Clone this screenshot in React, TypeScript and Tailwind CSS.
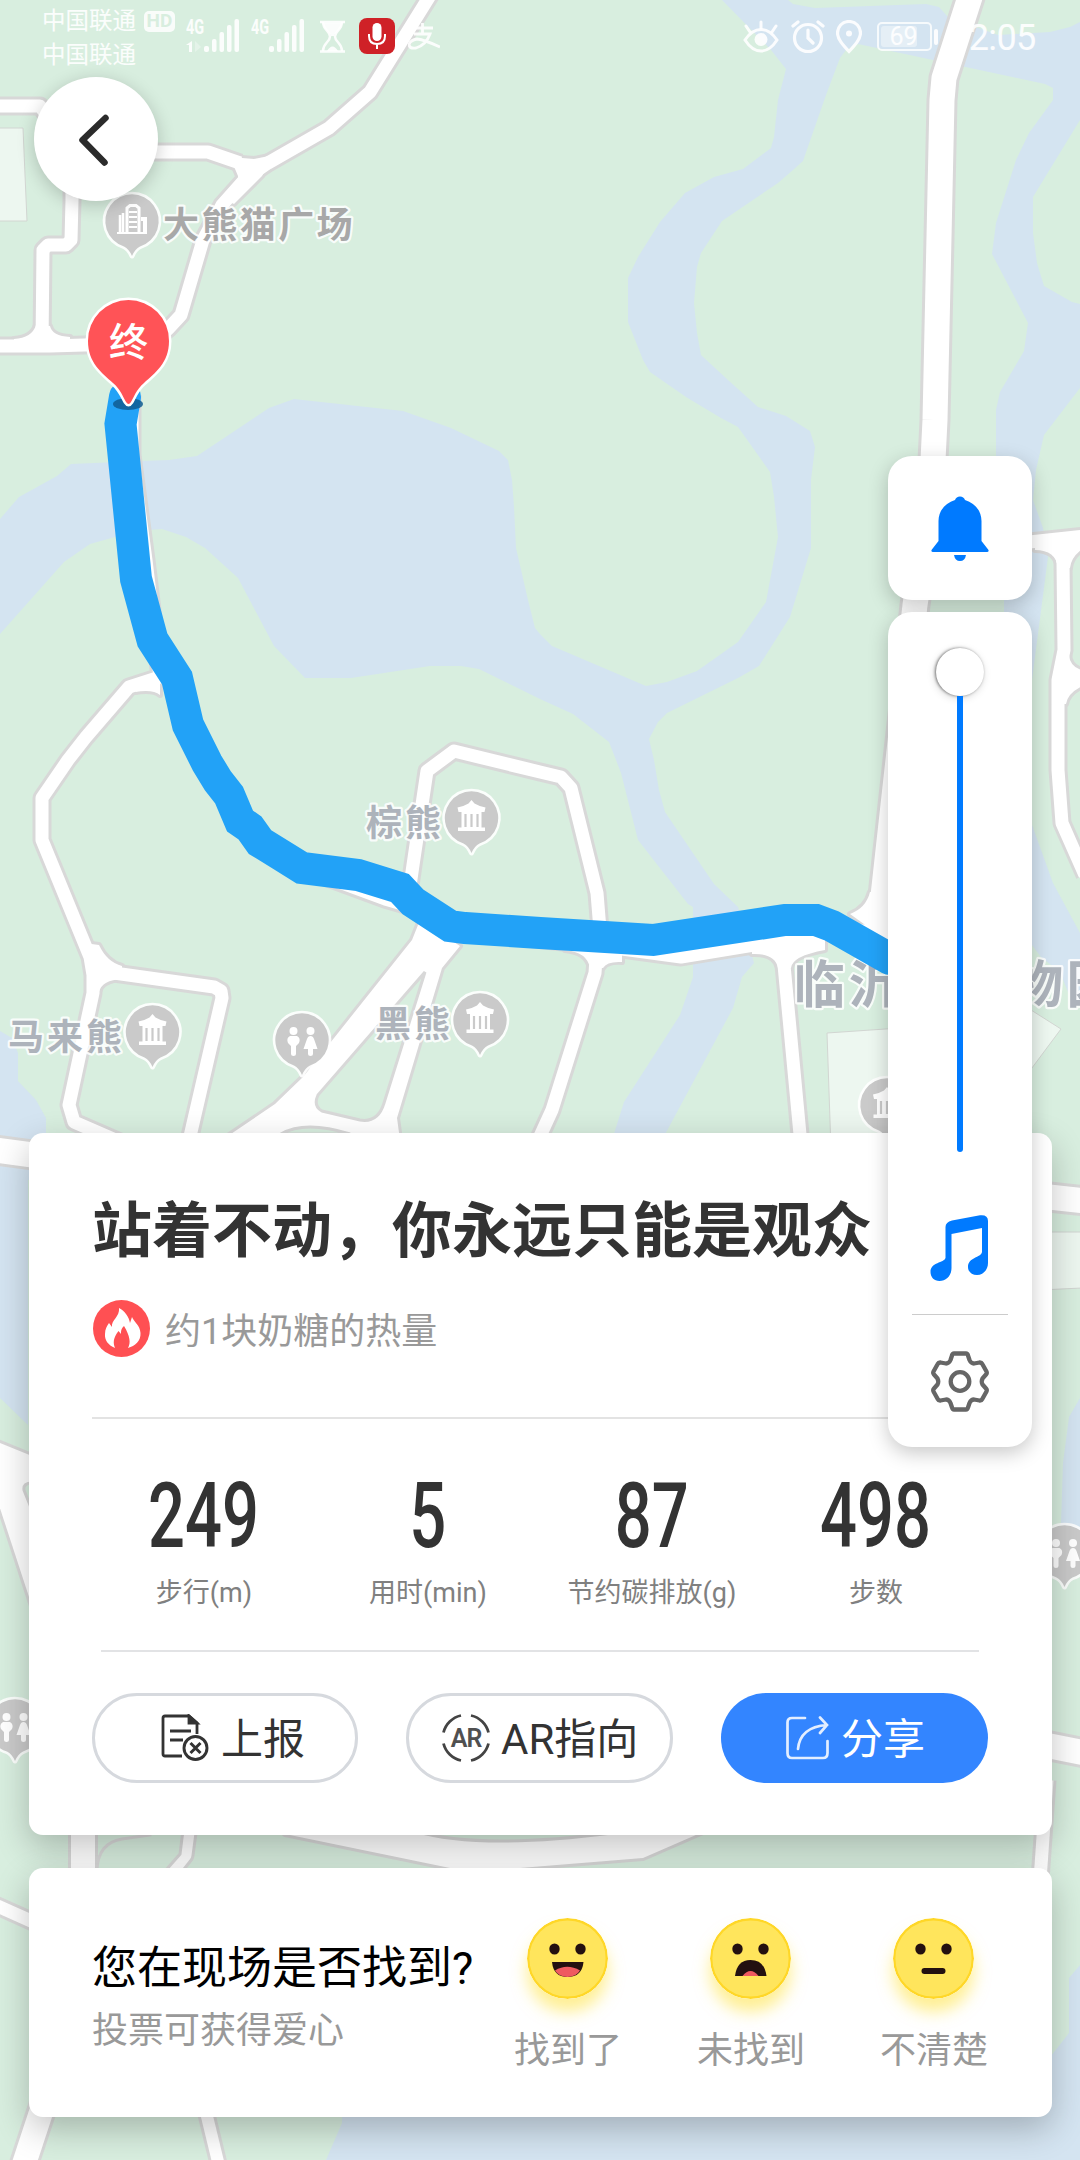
import React from "react";

const fontMain = "font-[Roboto,'Noto_Sans_CJK_SC',sans-serif]";

const GREEN = "#d8eedf";
const WATER = "#d4e4f1";

const waterShapes: string[] = [
  "M722 0L771 50L786 69L778 100L774 137L771 148L743 169L714 177L685 193L660 222L638 257L628 278L628 322L643 360L650 372L686 397L721 418L738 427L770 472L774 497L778 537L766 602L738 642L697 671L667 682L646 686L552 646L540 634L535 628L528 600L516 548L514 507L512 480L508 460L499 451L451 428L403 411L294 399L269 408L197 456L169 460L141 461L71 464L57 476L19 497L0 519V634L64 562L90 544L115 537L148 530L162 529L186 537L205 548L238 578L274 646L305 678H351L430 666H461L479 669L540 699L573 714L609 742L616 760L621 773L638 840L688 904L693 907V977L680 1015L624 1102L612 1140H662L733 1008L742 977L754 963L752 955L738 907L714 884L665 812L659 790L654 760L649 739L658 722L667 713L738 678L759 666L790 617L811 548V480L815 447L810 431L786 416L758 407L728 380L701 355L697 333L694 303L697 267L701 253L722 221L778 183L793 170L803 161L826 95L840 58L846 50L858 44L933 60L1045 84L1053 88V100L1029 133L1016 160L996 223L992 254L1028 323L1024 351L1000 392L996 410V560L1004 600V680H1032L1048 557L1043 528L1033 500L1036 470L1044 435L1080 388V304L1072 302L1044 286L1037 263L1033 233V197L1080 120V22L1070 27L1050 32L998 35L948 17L939 7L926 4L815 8L793 4L788 0Z",
  "M1032 825L1053 883L1080 933V1002L1068 992L1060 972L1041 957L1032 945Z",
  "M0 1031L12 1038L18 1053V1081L36 1100L46 1118V1180L28 1180V1425L0 1398Z",
  "M1080 1398L1069 1417L1063 1463L1061 1523V1555H1080Z",
  "M1080 1965L1069 1978V2033L1040 2070V2100H342V2123L326 2160H1080Z",
];

const buildings: string[] = [
  "M-2 128H23L27 221H-2Z",
  "M827 1033L900 1028V1150H831Z",
  "M1020 1003L1061 1029L1020 1084Z",
  "M1040 1232H1082V1288L1040 1290Z",
];

const roads: { d: string; w: number }[] = [
  { d: "M431 -6L370 92L329 128L268 163L246 178L222 205L203 240L181 315L168 329L150 343L84 345L50 346H-5", w: 13 },
  { d: "M-5 106H40L72 150V200L71 240L66 245H48L43 250L42 345", w: 13 },
  { d: "M72 150L157 152H208L240 163", w: 13 },
  { d: "M132 395V455L146 560L160 677L129 687L86 737L68 760L42 798V840L90 957L93 975V993L69 1105L74 1122L120 1142", w: 13 },
  { d: "M90 966L114 973L214 987L221 991L222 998L188 1145", w: 13 },
  { d: "M971 -6L944 78L942 100L935 420L931 500L915 605L898 760L882 905L895 940", w: 25 },
  { d: "M1020 543L1085 536", w: 13 },
  { d: "M1059 540L1063 563L1064 650L1058 680V770L1062 823L1085 875", w: 13 },
  { d: "M1058 690L1085 675", w: 13 },
  { d: "M301 868L385 899L430 912L461 930L545 940L600 946L681 957L760 944L800 934L885 930", w: 13 },
  { d: "M408 900L413 865L427 771L454 751L540 772L561 777L571 788L597 893L600 930", w: 13 },
  { d: "M597 945L595 973L552 1110L536 1145", w: 13 },
  { d: "M783 945L784 965L801 1145", w: 13 },
  { d: "M-5 1150L40 1156", w: 25 },
  { d: "M1040 1196L1085 1201", w: 25 },
  { d: "M1040 1744L1085 1753", w: 25 },
  { d: "M1047 1780L1040 1880", w: 13 },
  { d: "M-5 1905L40 1925", w: 13 },
  { d: "M83 1820V1880", w: 24 },
  { d: "M189 1825L185 1855L170 1874", w: 13 },
  { d: "M50 2085L22 2170", w: 24 },
  { d: "M203 2100L220 2170", w: 12 },
];

const junctions: string[] = [
  "M230 157L254 159L274 155L262 176L234 204L226 200L238 182L238 176Z",
  "M36 325Q32 338 14 339V351H70V337Q52 336 50 326Z",
  "M148 680Q158 676 160 665V695Q153 689 135 692Z",
  "M420 920L412 940L303 1077L275 1104L222 1140H400L397 1118L442 968L460 946Z",
  "M84 943L99 945Q107 962 122 966V979Q102 980 99 992H87L88 975Z",
  "M565 950Q587 952 590 968H603Q607 961 622 962V940H565Z",
  "M752 954Q775 953 778 968H791Q792 956 825 950V930H752Z",
  "M850 914Q866 908 870 892H900V950Z",
  "M1035 550Q1056 550 1058 568H1070Q1071 556 1085 547V536H1035Z",
  "M1069 655Q1070 668 1085 671V685Q1068 692 1066 704H1054V680Z",
  "M-5 1441L32 1456V1606L-5 1493Z",
  "M285 1834L450 1868H520L643 1858L712 1828H285Z",
];

const greenIslands: string[] = [
  "M425 972L318 1095Q313 1106 322 1111L360 1120Q378 1123 384 1103Z",
  "M281 1134Q305 1120 350 1134Z",
  "M415 1831Q478 1850 612 1833V1825H415Z",
  "M97 1870Q98 1843 122 1839L150 1835V1830H183L180 1854L166 1870Z",
  "M40 1530L24 1490Q23 1483 32 1483Z",
];

function PavilionGlyph() {
  return (
    <g fill="#fff">
      <path d="M0 -18L3 -14.500Q7 -12 14 -10.500L13 -6H10V9.500H13.500V13H-13.500V9.500H-10V-6H-13L-14 -10.500Q-7 -12 -3 -14.500Z" />
      <path d="M-6 -4V9M0 -4V9M6 -4V9" stroke="#cacaca" strokeWidth="2.200" />
    </g>
  );
}

function ToiletGlyph() {
  return (
    <g fill="#fff">
      <circle cx="-8.500" cy="-9" r="4" />
      <circle cx="8.500" cy="-9" r="4" />
      <path d="M-12 -4H-5Q-1 -2 -3 3L-6 6V14Q-6 16 -8.500 16Q-11 16 -11 14V6L-14 3Q-16 -2 -12 -4Z" />
      <path d="M8.500 -4Q11 -4 12 -1L15.500 9H11V14Q11 16 8.500 16Q6 16 6 14V9H1.500L5 -1Q6 -4 8.500 -4Z" />
    </g>
  );
}

function BuildingGlyph() {
  return (
    <g fill="none" stroke="#fff">
      <path d="M-5 11V-13L-2 -15.500H4L7 -13V11" strokeWidth="3" />
      <path d="M-3 -9H5M-3 -4H5M-3 1H5M-3 6H5" strokeWidth="1.800" />
      <path d="M-12 -6V11M-9 -8V11" strokeWidth="2.500" />
      <path d="M9 -2H13V11" strokeWidth="4" />
      <path d="M-15 12H15" strokeWidth="2" />
    </g>
  );
}

function Poi({ x, y, kind }: { x: number; y: number; kind: "pavilion" | "toilet" | "building" }) {
  return (
    <g transform={`translate(${x} ${y})`}>
      <path
        d="M-8 25.500A26.700 26.700 0 1 1 8 25.500Q3 28 0 35Q-3 28 -8 25.500Z"
        fill="#cacaca"
        stroke="#fff"
        strokeOpacity="0.900"
        strokeWidth="5"
        paintOrder="stroke"
        strokeLinejoin="round"
      />
      {kind === "pavilion" ? <PavilionGlyph /> : kind === "toilet" ? <ToiletGlyph /> : <BuildingGlyph />}
    </g>
  );
}

function MapLabel({ x, y, size, gap, fill, children }: { x: number; y: number; size: number; gap: number; fill: string; children: string }) {
  return (
    <text x={x} y={y} fontSize={size} letterSpacing={gap} fontWeight="600" fill={fill} stroke="#fff" strokeOpacity="0.850" strokeWidth="4.500" strokeLinejoin="round" paintOrder="stroke">
      {children}
    </text>
  );
}

function MapCanvas() {
  return (
    <svg className={`absolute inset-0 ${fontMain}`} width="1080" height="2160" viewBox="0 0 1080 2160">
      <rect width="1080" height="2160" fill={GREEN} />
      {waterShapes.map((d) => (
        <path key={d} d={d} fill={WATER} />
      ))}
      {buildings.map((d) => (
        <path key={d} d={d} fill="#edf7f0" stroke="#d2d6d2" strokeWidth="1" />
      ))}
      <g fill="none" stroke="#d8d8d8" strokeLinejoin="round">
        {roads.map((r) => (
          <path key={r.d} d={r.d} strokeWidth={r.w + 6} />
        ))}
        {junctions.map((d) => (
          <path key={d} d={d} strokeWidth="6" />
        ))}
      </g>
      <g fill="none" stroke="#fff" strokeLinejoin="round">
        {roads.map((r) => (
          <path key={r.d} d={r.d} strokeWidth={r.w} />
        ))}
        {junctions.map((d) => (
          <path key={d} d={d} fill="#fff" stroke="none" />
        ))}
      </g>
      {greenIslands.map((d) => (
        <path key={d} d={d} fill={GREEN} stroke="#d8d8d8" strokeWidth="3" />
      ))}

      <Poi x={132} y={221} kind="building" />
      <Poi x={471.500} y={818} kind="pavilion" />
      <Poi x={152.500} y={1032} kind="pavilion" />
      <Poi x={480} y={1020} kind="pavilion" />
      <Poi x={302} y={1040} kind="toilet" />
      <Poi x={887} y={1105} kind="pavilion" />
      <Poi x={15} y={1726} kind="toilet" />
      <Poi x={1064.500} y={1552} kind="toilet" />

      <MapLabel x={163} y={238} size={36} gap={2.4} fill="#a8a8a8">大熊猫广场</MapLabel>
      <MapLabel x={366} y={836} size={36} gap={3} fill="#adb3bb">棕熊</MapLabel>
      <MapLabel x={8} y={1049.5} size={36} gap={3} fill="#adb3bb">马来熊</MapLabel>
      <MapLabel x={375} y={1037} size={36} gap={3} fill="#adb3bb">黑熊</MapLabel>
      <MapLabel x={794} y={1003} size={51} gap={3.5} fill="#adb3bb">临沂动植物园</MapLabel>

      <path
        d="M125 397L120.500 424L136 579L152.500 640L177 678L188 725L207 763L218 781L229 795L240 821L250 828L260 842L281 855L302 868L358 875L400 888L413 902L450 926L465 928L540 933L653 940L785 920H816L832 926L890 959"
        fill="none"
        stroke="#22a2f7"
        strokeWidth="32"
        strokeLinecap="round"
        strokeLinejoin="miter"
      />

      <ellipse cx="128" cy="404" rx="15" ry="6" fill="#0f5c92" fillOpacity="0.850" />
      <path
        d="M128.500 300A40.500 40.500 0 0 1 169 341C169 363 155 373 144 383C136 390 134 397 131 402Q128.500 406 126 402C123 397 121 390 113 383C102 373 88 363 88 341A40.500 40.500 0 0 1 128.500 300Z"
        fill="#ff5357"
        stroke="#fff"
        strokeWidth="5"
        paintOrder="stroke"
      />
      <text x="128.500" y="356" fontSize="39" fontWeight="500" fill="#fff" textAnchor="middle">终</text>
    </svg>
  );
}

function Signal() {
  return (
    <svg className="h-[33px] w-[35px]" viewBox="0 0 35 33" fill="currentColor">
      <rect x="0" y="27" width="5" height="6" rx="2" />
      <rect x="8" y="20" width="4.500" height="13" rx="2" />
      <rect x="15.500" y="13" width="4.500" height="20" rx="2" />
      <rect x="23" y="6" width="4.500" height="27" rx="2" />
      <rect x="30.500" y="0" width="4.500" height="33" rx="2" />
    </svg>
  );
}

function Network({ second }: { second?: boolean }) {
  return (
    <div className="flex">
      <div className="flex w-[18px] flex-col items-start">
        <span className="origin-left scale-x-[0.72] text-[20px] leading-[16px] font-bold">4G</span>
        {!second && (
          <svg className="mt-[6px] h-[11px] w-[17px]" viewBox="0 0 17 11" fill="currentColor">
            <path d="M6 0V11H3V4H0Z" />
            <path d="M9 0V11L15 6Z" opacity="0.350" />
          </svg>
        )}
      </div>
      <Signal />
    </div>
  );
}

function StatusBar() {
  return (
    <div className="flex h-[72px] items-start pl-[42px] text-white/90">
      <div className="flex flex-col pt-[4px] text-[23.500px] leading-[34px]">
        <div className="flex items-center gap-[8px]">
          <span>中国联通</span>
          <span className="flex h-[21px] w-[31px] items-center justify-center rounded-[5px] bg-white/85 text-[19px] font-bold text-[#d8eedf]">HD</span>
        </div>
        <span>中国联通</span>
      </div>
      <div className="mt-[19px] ml-[11px] flex gap-[12px]">
        <Network />
        <Network second />
      </div>
      <svg className="mt-[20px] ml-[16px] h-[33px] w-[25px]" viewBox="0 0 25 33" fill="none" stroke="currentColor" strokeWidth="2.500">
        <path d="M0 2H25M0 31.500H25" />
        <path d="M3 2C3 10 10 11 10 16.500C10 22 3 23 3 31M22 2C22 10 15 11 15 16.500C15 22 22 23 22 31" />
        <path d="M3 3H22C22 9 15 12 14 16H11C10 12 3 9 3 3ZM7 31Q12.500 22 18 31Z" fill="currentColor" stroke="none" />
      </svg>
      <div className="mt-[18px] ml-[14px] flex h-[36px] w-[36px] items-center justify-center rounded-[8px] bg-[#cf2127] text-white">
        <svg width="18" height="26" viewBox="0 0 18 26" fill="none" stroke="currentColor" strokeWidth="2">
          <rect x="4.500" y="0" width="9" height="18" rx="4.500" fill="currentColor" stroke="none" />
          <path d="M1 11V13Q1 21 9 21Q17 21 17 13V11M9 21V26" />
        </svg>
      </div>
      <svg className="mt-[23px] ml-[13px] h-[28px] w-[32px]" viewBox="0 0 32 28" fill="none" stroke="currentColor" strokeWidth="2.800">
        <path d="M4 5H25M14.500 0V10M6 11H22Q18 22 8 25Q2 26 1 22Q2 17 9 16Q17 17 32 24" />
      </svg>

      <svg className="mt-[20px] ml-[303px] h-[33px] w-[36px]" viewBox="0 0 36 33" fill="none" stroke="currentColor" strokeWidth="3">
        <path d="M2 20Q9 9.500 18 9.500Q27 9.500 34 20Q27 31 18 31Q9 31 2 20Z" />
        <circle cx="18" cy="19.500" r="6.500" fill="currentColor" stroke="none" />
        <path d="M18 8V2M7 12L3 6M29 12L33 6" strokeLinecap="round" />
      </svg>
      <svg className="mt-[19px] ml-[12px] h-[35px] w-[34px]" viewBox="0 0 34 35" fill="none" stroke="currentColor" strokeWidth="3.200" strokeLinecap="round">
        <circle cx="17" cy="19" r="13.500" />
        <path d="M17 11V19L22 24M2 7L7 3M32 7L27 3" />
      </svg>
      <svg className="mt-[20px] ml-[11px] h-[34px] w-[26px]" viewBox="0 0 26 34" fill="none" stroke="currentColor" strokeWidth="3.200">
        <path d="M13 1.500C20 1.500 24.500 7 24.500 13C24.500 19 19 25 13 31.500C7 25 1.500 19 1.500 13C1.500 7 6 1.500 13 1.500Z" />
        <circle cx="13" cy="13.500" r="3" fill="currentColor" stroke="none" />
      </svg>
      <div className="mt-[22px] ml-[15px] flex h-[29px] w-[55px] rounded-[5px] border-2 border-white/80 p-[2px]">
        <div className="flex w-[36px] items-center justify-center rounded-[3px] bg-white/40 pl-[9px] text-[25px] leading-none">69</div>
      </div>
      <div className="mt-[29px] ml-[2px] h-[16px] w-[4px] rounded-[2px] bg-white/90" />
      <span className="mt-[17px] ml-[11px] text-[36px] leading-[42px] tracking-[-0.6px]">12:05</span>
    </div>
  );
}

function Flame() {
  return (
    <svg className="size-[57px]" viewBox="0 0 57 57">
      <circle cx="28.500" cy="28.500" r="28.500" fill="#ff5053" />
      <path
        d="M26 8C32 11 36 17 37 23L39 17C41 22 47 25 47.500 33C48 41 42 46 35 48C38 43 37 36 31 26C28 29 28 31 28 34L25.500 31C20 38 20 43 22 48C15 45 11.500 40 12 34C12 29 14 26 16 23L19 27C18 20 27 17 26 8Z"
        fill="#fff"
      />
    </svg>
  );
}

function ReportIcon() {
  return (
    <svg className="h-[48px] w-[48px]" viewBox="0 0 48 48" fill="none" stroke="#333" strokeWidth="2.800">
      <path d="M21 42H4Q2 42 2 40V4Q2 2 4 2H28L36 9V20M9 17H30M9 26H22" />
      <path d="M28 2V9H36Z" fill="#333" />
      <circle cx="34.500" cy="34" r="11.500" strokeWidth="2.900" />
      <path d="M29.500 29L39.500 39M39.500 29L29.500 39" strokeWidth="3" />
    </svg>
  );
}

function ArIcon() {
  return (
    <svg className="h-[48px] w-[48px]" viewBox="0 0 48 48" fill="none" stroke="#444" strokeWidth="2.800">
      <path d="M19 1.500A23 23 0 0 0 1.500 18.500M29 1.500A23 23 0 0 1 46.500 18.500M1.500 29.500A23 23 0 0 0 19 46.500M46.500 29.500A23 23 0 0 1 29 46.500" />
      <text x="24" y="32.500" fontSize="25" fontWeight="600" fill="#505050" stroke="none" textAnchor="middle" letterSpacing="-1">AR</text>
    </svg>
  );
}

function ShareIcon() {
  return (
    <svg className="h-[44px] w-[43px]" viewBox="0 0 43 44" fill="none" stroke="#e3eeff" strokeWidth="2.700" strokeLinecap="round">
      <path d="M19 2H6Q1.500 2 1.500 6.500V37Q1.500 42 6 42H37Q41.500 42 41.500 37V25" />
      <path d="M12 33Q14 11 41 9M34 1.500L41 9L34 17" />
    </svg>
  );
}

const stats = [
  { value: "249", label: "步行(m)" },
  { value: "5", label: "用时(min)" },
  { value: "87", label: "节约碳排放(g)" },
  { value: "498", label: "步数" },
];

function SummaryCard() {
  return (
    <section className="mr-[28px] ml-[28.5px] h-[702px] rounded-[14px] bg-white pt-[63px] pr-[64px] pl-[63.5px] shadow-[0_12px_34px_rgba(0,0,0,0.24)]">
      <h1 className="text-[60px] leading-[72px] font-bold whitespace-nowrap text-[#333]">站着不动，你永远只能是观众</h1>
      <div className="mt-[32px] flex items-center gap-[15px] pl-px">
        <Flame />
        <span className="mt-[8px] text-[36px] leading-[49px] text-[#999]">约1块奶糖的热量</span>
      </div>
      <div className="mt-[60px] h-[2px] bg-[#e3e3e3]" />
      <div className="mt-[49px] grid grid-cols-4 text-center">
        {stats.map((s) => (
          <div key={s.label} className="flex flex-col items-center">
            <span className="scale-x-[0.715] text-[91px] leading-[96px] font-medium text-[#333]">{s.value}</span>
            <span className="mt-[9px] text-[27px] leading-[40px] whitespace-nowrap text-[#808080]">{s.label}</span>
          </div>
        ))}
      </div>
      <div className="mr-[9px] ml-[9px] mt-[37px] h-[2px] bg-[#e2e3e5]" />
      <div className="mt-[41px] flex justify-between text-[42px] leading-none text-[#333]">
        <button className="flex h-[90px] w-[266px] items-center gap-[12px] rounded-full border-3 border-[#d6d9de] pl-[66px]">
          <ReportIcon />
          <span className="mt-[5px]">上报</span>
        </button>
        <button className="flex h-[90px] w-[267px] items-center gap-[11px] rounded-full border-3 border-[#d6d9de] pl-[33px]">
          <ArIcon />
          <span className="mt-[5px]">AR指向</span>
        </button>
        <button className="flex h-[90px] w-[267px] items-center gap-[12px] rounded-full bg-[#3385ff] pl-[65px] text-white">
          <ShareIcon />
          <span className="mt-[5px]">分享</span>
        </button>
      </div>
    </section>
  );
}

function Face({ mood }: { mood: "happy" | "sad" | "flat" }) {
  return (
    <svg className="size-[81px] rounded-full shadow-[0_13px_16px_rgba(255,225,60,0.55)]" viewBox="0 0 81 81">
      <circle cx="40.500" cy="40.500" r="39.300" fill="#ffe55c" stroke="#ffd727" strokeWidth="2.400" />
      <ellipse cx="27.500" cy="31" rx="5.200" ry="5.600" fill="#231010" />
      <ellipse cx="53.500" cy="31" rx="5.200" ry="5.600" fill="#231010" />
      {mood === "happy" && (
        <>
          <path d="M25 44H56.500Q55 59 40.500 59Q26.500 59 25 44Z" fill="#231010" />
          <path d="M28 52.500Q40 45 53 52.500Q49 59 40.500 59Q32 59 28 52.500Z" fill="#ef5a60" />
        </>
      )}
      {mood === "sad" && (
        <>
          <path d="M25 58Q27 42 40.500 42Q54.500 42 56.500 58Z" fill="#231010" />
          <path d="M32.500 58Q40.500 48 48.500 58Z" fill="#ef5a60" />
        </>
      )}
      {mood === "flat" && <rect x="28.500" y="50" width="24" height="6" rx="3" fill="#231010" />}
    </svg>
  );
}

const votes: { mood: "happy" | "sad" | "flat"; label: string }[] = [
  { mood: "happy", label: "找到了" },
  { mood: "sad", label: "未找到" },
  { mood: "flat", label: "不清楚" },
];

function VoteCard() {
  return (
    <section className="mt-[33px] mr-[28px] ml-[28.5px] flex h-[249px] justify-between rounded-[14px] bg-white pr-[64px] pl-[63.5px] shadow-[0_12px_34px_rgba(0,0,0,0.24)]">
      <div className="pt-[71px] whitespace-nowrap">
        <p className="text-[45px] leading-[60px] text-black">您在现场是否找到?</p>
        <p className="mt-[8px] text-[36px] leading-[48px] text-[#999]">投票可获得爱心</p>
      </div>
      <div className="flex gap-[75px] pt-[50px]">
        {votes.map((v) => (
          <div key={v.mood} className="flex flex-col items-center">
            <Face mood={v.mood} />
            <span className="mt-[28px] text-[36px] leading-[48px] text-[#999]">{v.label}</span>
          </div>
        ))}
      </div>
    </section>
  );
}

function ToolPanel() {
  return (
    <aside className="absolute top-[456px] right-[48px] flex w-[144px] flex-col gap-[12px]">
      <div className="flex h-[144px] items-center justify-center rounded-[24px] bg-white shadow-[0_6px_20px_rgba(0,0,0,0.22)]">
        <svg className="h-[66px] w-[58px]" viewBox="0 0 58 66" fill="#007aff">
          <path d="M24 5A5.300 5.300 0 0 1 34 5C44 8 50.500 16 50.500 26V46L57.500 55Q58 57 56 57H2Q0 57 .5 55L7.500 46V26C7.500 16 14 8 24 5Z" />
          <path d="M23 60H35Q34 66 29 66Q24 66 23 60Z" />
        </svg>
      </div>
      <div className="flex h-[835px] flex-col items-center rounded-[24px] bg-white pt-[36px] shadow-[0_6px_20px_rgba(0,0,0,0.22)]">
        <div className="size-[48px] rounded-full bg-white shadow-[-1px_0_3px_rgba(0,0,0,0.5),-1px_2px_8px_rgba(0,0,0,0.15)]" />
        <div className="h-[456px] w-[6px] rounded-b-full bg-[#007aff]" />
        <svg className="mt-[63px] mr-[3px] h-[66px] w-[58px]" viewBox="0 0 58 66" fill="#007aff">
          <path d="M22 5.500L50 .3Q58 -.5 58 6V48C58 55 53 60 47 60C42 60 38 57 38 52C38 42 51 43 52 37V13L21.500 19V53C21.500 61 16 66 9.500 66C4 66 .5 62 .5 57C.5 47 14 48 15.500 43V12Q15.500 7 22 5.500Z" />
        </svg>
        <div className="mt-[33px] h-px w-[96px] bg-[#ccc]" />
        <svg className="mt-[36px] h-[61px] w-[60px]" viewBox="-30 -30.500 60 61" fill="none" stroke="#666" strokeWidth="4.300" strokeLinejoin="round">
          <circle r="9.300" />
          <path d="M-6 -28H6Q7.500 -28 8 -26L9.500 -21.500Q11 -18 14 -18L19.500 -19Q21.500 -19.200 22.300 -17.500L26.500 -10Q27.300 -8.500 26 -7L22.500 -3Q21 0 22.500 3L26 7Q27.300 8.500 26.500 10L22.300 17.500Q21.500 19.200 19.500 19L14 18Q11 18 9.500 21.500L8 26Q7.500 28 6 28H-6Q-7.500 28 -8 26L-9.500 21.500Q-11 18 -14 18L-19.500 19Q-21.500 19.200 -22.300 17.500L-26.500 10Q-27.300 8.500 -26 7L-22.500 3Q-21 0 -22.500 -3L-26 -7Q-27.300 -8.500 -26.500 -10L-22.300 -17.500Q-21.500 -19.200 -19.500 -19L-14 -18Q-11 -18 -9.500 -21.500L-8 -26Q-7.500 -28 -6 -28Z" />
        </svg>
      </div>
    </aside>
  );
}

export default function App() {
  return (
    <div className={`relative h-[2160px] w-[1080px] overflow-hidden bg-[#d8eedf] ${fontMain}`}>
      <MapCanvas />
      <main className="relative flex h-full flex-col">
        <StatusBar />
        <button className="mt-[5px] ml-[34px] flex size-[124px] shrink-0 items-center justify-center rounded-full bg-white pt-px pr-[4px] shadow-[0_4px_18px_rgba(0,0,0,0.2)]" aria-label="返回">
          <svg className="h-[52px] w-[30px]" viewBox="0 0 30 52" fill="none" stroke="#2b2b2b" strokeWidth="6.500" strokeLinecap="round" strokeLinejoin="round">
            <path d="M26.500 4L3.500 26L25.500 48.500" />
          </svg>
        </button>
        <div className="grow" />
        <SummaryCard />
        <VoteCard />
        <div className="h-[43.5px] shrink-0" />
      </main>
      <ToolPanel />
    </div>
  );
}
